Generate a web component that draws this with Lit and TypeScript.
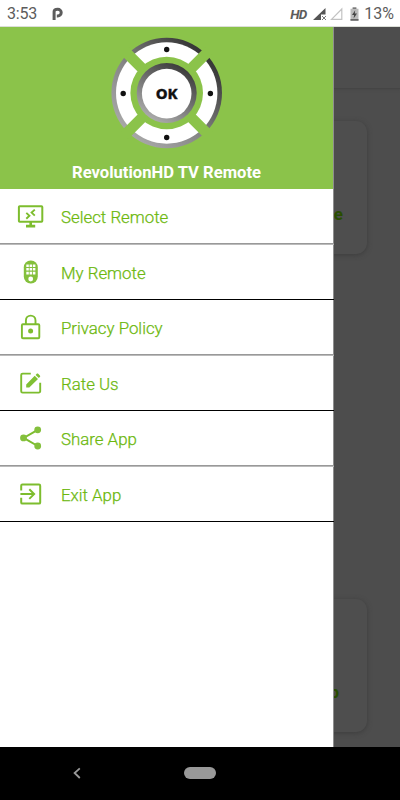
import { LitElement, html, svg, css } from "lit";
import { customElement } from "lit/decorators.js";

const monitor = svg`<g fill="none" stroke="#7dbd2e" stroke-width="2"><rect x="1.9" y="4.2" width="23.4" height="15.6" rx=".8"/><path d="M13.7 20v4M9 24.1h9.2" stroke-width="2.6"/><path d="M9.3 10.9l3.1 2.9-3.1 2.9M17.8 7.6l-3.2 3 3.2 3" stroke-width="1.9"/></g>`;
const remote = svg`<rect x="6.8" y="2.4" width="14" height="23" rx="6.8" fill="#84c03c"/><g fill="#fff"><path d="M9.3 6.5h2.5v2.5H9.3zM12.6 6.5h2.5v2.5h-2.5zM15.9 6.5h2.5v2.5h-2.5zM9.3 9.9h2.5v2.7H9.3zM12.6 9.9h2.5v2.7h-2.5zM15.9 9.9h2.5v2.7h-2.5zM9.3 13.7h2.5v2.7H9.3zM12.6 13.7h2.5v2.7h-2.5zM15.9 13.7h2.5v2.7h-2.5z"/><circle cx="13.7" cy="21" r="2.4"/></g>`;
const lock = svg`<g fill="none" stroke="#7dbd2e" stroke-width="1.9"><rect x="4.9" y="11.2" width="17.4" height="14" rx="1"/><path d="M8.9 11V7.4a4.8 4.8 0 0 1 9.6 0V11"/></g><circle cx="13.6" cy="18.1" r="2.5" fill="#7dbd2e"/>`;
const edit = svg`<path d="M13.8 4.6H5.6a1.4 1.4 0 0 0-1.4 1.4v16.2a1.4 1.4 0 0 0 1.4 1.4h16.2a1.4 1.4 0 0 0 1.4-1.4v-8.4" fill="none" stroke="#7dbd2e" stroke-width="1.9"/><path d="M9.2 15.4l8.5-8.7 3.3 3.2-8.7 8.5H9.2zM18.6 5.9l1.1-1.1c.5-.5 1-.5 1.5 0l1.7 1.7c.5.5.5 1 0 1.4l-1.1 1.2z" fill="#80c034"/>`;
const share = svg`<path d="M20.7 5.8L6.7 13.9l14 8.1" fill="none" stroke="#7dbd2e" stroke-width="2"/><g fill="#84c03c"><circle cx="20.7" cy="5.8" r="3.4"/><circle cx="6.5" cy="13.9" r="3.4"/><circle cx="20.7" cy="22" r="3.4"/></g>`;
const exit = svg`<g fill="none" stroke="#7dbd2e" stroke-width="2"><path d="M4.2 10.4V5.8a1.2 1.2 0 0 1 1.2-1.2H22a1.2 1.2 0 0 1 1.2 1.2v16.6a1.2 1.2 0 0 1-1.2 1.2H5.4a1.2 1.2 0 0 1-1.2-1.2v-4.6M3.4 14.1h13.8M12.3 9.3l4.8 4.8-4.8 4.8"/></g>`;

const items = [
  { label: "Select Remote", icon: monitor, soft: true },
  { label: "My Remote", icon: remote, soft: false },
  { label: "Privacy Policy", icon: lock, soft: true },
  { label: "Rate Us", icon: edit, soft: false },
  { label: "Share App", icon: share, soft: true },
  { label: "Exit App", icon: exit, soft: false },
];

@customElement("app-root")
export class AppRoot extends LitElement {
  static styles = css`
    :host { display: flex; flex-direction: column; width: 400px; height: 800px; overflow: hidden; background: #fff; font-family: Roboto, sans-serif; }
    .status { height: 26px; flex: none; display: flex; align-items: center; padding: 1px 6px 0 7px; box-sizing: border-box; color: #5c5c5c; font-size: 16px; }
    .time { width: 45px; letter-spacing: -.2px; }
    .grow { flex: 1; }
    .hd { font-size: 13.5px; font-weight: 700; font-style: italic; letter-spacing: -.9px; margin-right: 7px; }
    .battery { margin: 0 5px 0 7px; }
    .tri { margin-right: 3px; }
    svg { display: block; flex: none; }
    .content { flex: none; height: 721px; display: flex; background: #4d4d4d; position: relative; overflow: hidden; box-sizing: border-box; border-top: 1px solid #dcdfd8; }
    .drawer { width: 333px; background: #fff; border-right: 1px solid #8e8e8e; flex: none; }
    .head { height: 162px; width: 333px; background: #8bc34a; display: flex; flex-direction: column; align-items: center; }
    .dial { margin-top: 9px; }
    .title { color: #fff; font-weight: 700; font-size: 16.6px; line-height: 20px; margin-top: 13px; white-space: nowrap; }
    .item { display: flex; align-items: center; height: 54px; padding-left: 17px; color: #6cb80e; font-size: 16.85px; font-weight: 300; -webkit-text-stroke: .25px #6cb80e; }
    .item span { margin-left: 16px; padding-top: 2px; white-space: nowrap; }
    .line { height: 1px; background: #000; width: 334px; }
    .soft { background: #999; border-bottom: 1px solid #bbb; }
    .behind { flex: 1; position: relative; overflow: hidden; }
    .bar { height: 61px; border-bottom: 1px solid #454545; box-shadow: 0 1px 2px #484848; }
    .card { position: absolute; left: -60px; width: 93px; height: 133px; border-radius: 11px; background: #4e4e4e; box-shadow: 0 1px 5px #3d3d3d; box-sizing: border-box; color: #294d00; font-weight: 700; font-size: 17px; line-height: 20px; text-align: right; }
    .first { top: 94px; padding: 83px 24px 0 0; }
    .second { top: 572px; padding: 83px 28px 0 0; }
    .nav { flex: 1; background: #000; display: flex; align-items: center; padding: 0 0 1px 71px; }
    .home { width: 32px; height: 12px; border-radius: 6px; background: #999; margin-left: 101px; }
  `;

  render() {
    return html`
      <div class="status">
        <span class="time">3:53</span>
        <svg width="12" height="14" viewBox="0 0 12 14"><path d="M2.1 13V4.5Q2.1 2.2 5.8 2.2a3.4 3.4 0 0 1 0 6.8H4.8" fill="none" stroke="#5c5c5c" stroke-width="3"/></svg>
        <span class="grow"></span>
        <span class="hd">HD</span>
        <svg class="tri" width="14" height="14" viewBox="0 0 14 14"><path d="M0 13L12.5 1v6.6H8V13z" fill="#555"/><path d="M9 9l4 4M13 9l-4 4" stroke="#777" stroke-width="1"/></svg>
        <svg width="13" height="14" viewBox="0 0 13 14"><path d="M1.5 12.3L11.8 2v10.3z" fill="none" stroke="#c2c2c2" stroke-width="1.2"/></svg>
        <svg class="battery" width="9" height="14" viewBox="0 0 9 14"><path d="M.5 1.8h2V.4h4v1.4h2v11.8h-8z" fill="#bbb"/><path d="M.5 12h8v1.7h-8zM2.7.4h3.6v1.4H2.7z" fill="#666"/><path d="M5.2 3.2L2 8h2.1l-.5 3.4L7 6.6H4.8z" fill="#444"/></svg>
        <span>13%</span>
      </div>
      <div class="content">
        <div class="drawer">
          <div class="head">
            <svg class="dial" width="115" height="114" viewBox="-57.7 -57 115 114">
              <defs>
                <linearGradient id="outer" x1=".15" y1=".9" x2=".85" y2=".15"><stop offset="0" stop-color="#aaa"/><stop offset=".45" stop-color="#858585"/><stop offset="1" stop-color="#353535"/></linearGradient>
                <linearGradient id="inner" x1=".2" y1=".9" x2=".7" y2=".05"><stop offset="0" stop-color="#aaa"/><stop offset="1" stop-color="#3e3e3e"/></linearGradient>
              </defs>
              <circle r="55.3" fill="url(#outer)"/><circle r="50.7" fill="#fff"/><circle r="36.3" fill="#8bc34a"/>
              <path d="M-42-42L42 42M-42 42L42-42" stroke="#8bc34a" stroke-width="10.8"/>
              <circle r="30" fill="url(#inner)"/><circle cy=".6" r="24.8" fill="#fff"/>
              <g fill="#111"><circle cy="-43.5" r="2.7"/><circle cy="44.5" r="2.7"/><circle cx="-43.5" cy=".5" r="2.7"/><circle cx="43.7" cy=".5" r="2.7"/></g>
              <text x="0" y="5.6" text-anchor="middle" font-family="Noto Sans, Open Sans, sans-serif" font-weight="800" font-size="14.3" textLength="22" lengthAdjust="spacingAndGlyphs" fill="#111" stroke="#111" stroke-width=".3">OK</text>
            </svg>
            <div class="title">RevolutionHD TV Remote</div>
          </div>
          ${items.map((item) => html`
            <div class="item"><svg width="28" height="28" viewBox="0 0 28 28">${item.icon}</svg><span>${item.label}</span></div>
            <div class="line ${item.soft ? "soft" : ""}"></div>`)}
        </div>
        <div class="behind">
          <div class="bar"></div>
          <div class="card first">e</div>
          <div class="card second">p</div>
        </div>
      </div>
      <div class="nav">
        <svg width="12" height="14" viewBox="0 0 12 14"><path d="M8.8 2.3L3.6 7l5.2 5" fill="none" stroke="#999" stroke-width="1.8"/></svg>
        <div class="home"></div>
      </div>`;
  }
}
